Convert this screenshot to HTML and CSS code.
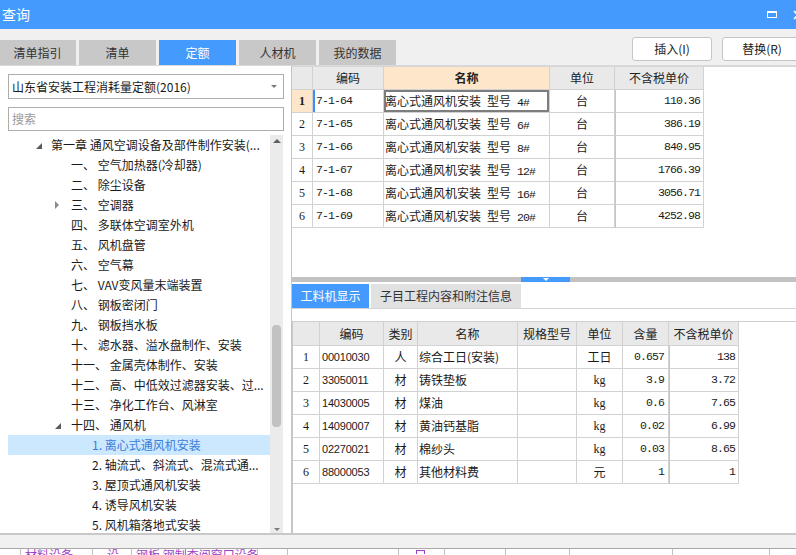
FILE: index.html
```html
<!DOCTYPE html>
<html lang="zh-CN">
<head>
<meta charset="utf-8">
<title>查询</title>
<link rel="stylesheet" href="styles.css">
</head>
<body>
<div class="titlebar">
  <span class="title">查询</span>
  <div class="win-ctrls">
    <span class="max-icon"></span>
    <svg class="close-icon" viewBox="0 0 10 10"><path d="M1 1 L9 9 M9 1 L1 9" stroke="#fff" stroke-width="1.6" fill="none"/></svg>
  </div>
</div>

<div class="toolbar">
  <div class="tabs">
    <div class="tab">清单指引</div>
    <div class="tab">清单</div>
    <div class="tab active">定额</div>
    <div class="tab">人材机</div>
    <div class="tab">我的数据</div>
  </div>
  <div class="btns">
    <button class="btn">插入(I)</button>
    <button class="btn">替换(R)</button>
  </div>
</div>

<div class="main">
  <div class="left">
    <div class="select">山东省安装工程消耗量定额(2016)<span class="caret"></span></div>
    <div class="search">搜索</div>
    <div class="treebox">
      <div class="tree">
        <div class="node l1"><span class="exp"><span class="tri-open"></span></span><span class="lbl">第一章 通风空调设备及部件制作安装(...</span></div>
        <div class="node l2"><span class="exp"></span><span class="lbl">一、 空气加热器(冷却器)</span></div>
        <div class="node l2"><span class="exp"></span><span class="lbl">二、 除尘设备</span></div>
        <div class="node l2"><span class="exp"><span class="tri-closed"></span></span><span class="lbl">三、 空调器</span></div>
        <div class="node l2"><span class="exp"></span><span class="lbl">四、 多联体空调室外机</span></div>
        <div class="node l2"><span class="exp"></span><span class="lbl">五、 风机盘管</span></div>
        <div class="node l2"><span class="exp"></span><span class="lbl">六、 空气幕</span></div>
        <div class="node l2"><span class="exp"></span><span class="lbl">七、 VAV变风量末端装置</span></div>
        <div class="node l2"><span class="exp"></span><span class="lbl">八、 钢板密闭门</span></div>
        <div class="node l2"><span class="exp"></span><span class="lbl">九、 钢板挡水板</span></div>
        <div class="node l2"><span class="exp"></span><span class="lbl">十、 滤水器、溢水盘制作、安装</span></div>
        <div class="node l2"><span class="exp"></span><span class="lbl">十一、 金属壳体制作、安装</span></div>
        <div class="node l2"><span class="exp"></span><span class="lbl">十二、 高、中低效过滤器安装、过...</span></div>
        <div class="node l2"><span class="exp"></span><span class="lbl">十三、 净化工作台、风淋室</span></div>
        <div class="node l2"><span class="exp"><span class="tri-open"></span></span><span class="lbl">十四、 通风机</span></div>
        <div class="node l3 selected"><span class="exp"></span><span class="lbl">1. 离心式通风机安装</span></div>
        <div class="node l3"><span class="exp"></span><span class="lbl">2. 轴流式、斜流式、混流式通...</span></div>
        <div class="node l3"><span class="exp"></span><span class="lbl">3. 屋顶式通风机安装</span></div>
        <div class="node l3"><span class="exp"></span><span class="lbl">4. 诱导风机安装</span></div>
        <div class="node l3"><span class="exp"></span><span class="lbl">5. 风机箱落地式安装</span></div>
      </div>
      <div class="vscroll">
        <span class="arrow-up"></span>
        <span class="thumb"></span>
        <span class="arrow-down"></span>
      </div>
    </div>
  </div>

  <div class="right">
    <div class="top-grid">
      <div class="g1 row head">
        <div class="c"></div>
        <div class="c center">编码</div>
        <div class="c center hl">名称</div>
        <div class="c center">单位</div>
        <div class="c center">不含税单价</div>
      </div>
      <div class="g1 row">
        <div class="c center rn cur">1</div>
        <div class="c mono pl cur-code">7-1-64</div>
        <div class="c name cur-cell">离心式通风机安装&ensp;型号&ensp;<span class="mono">4#</span></div>
        <div class="c center">台</div>
        <div class="c mono right">110.36</div>
      </div>
      <div class="g1 row">
        <div class="c center rn">2</div>
        <div class="c mono pl">7-1-65</div>
        <div class="c name">离心式通风机安装&ensp;型号&ensp;<span class="mono">6#</span></div>
        <div class="c center">台</div>
        <div class="c mono right">386.19</div>
      </div>
      <div class="g1 row">
        <div class="c center rn">3</div>
        <div class="c mono pl">7-1-66</div>
        <div class="c name">离心式通风机安装&ensp;型号&ensp;<span class="mono">8#</span></div>
        <div class="c center">台</div>
        <div class="c mono right">840.95</div>
      </div>
      <div class="g1 row">
        <div class="c center rn">4</div>
        <div class="c mono pl">7-1-67</div>
        <div class="c name">离心式通风机安装&ensp;型号&ensp;<span class="mono">12#</span></div>
        <div class="c center">台</div>
        <div class="c mono right">1766.39</div>
      </div>
      <div class="g1 row">
        <div class="c center rn">5</div>
        <div class="c mono pl">7-1-68</div>
        <div class="c name">离心式通风机安装&ensp;型号&ensp;<span class="mono">16#</span></div>
        <div class="c center">台</div>
        <div class="c mono right">3056.71</div>
      </div>
      <div class="g1 row">
        <div class="c center rn">6</div>
        <div class="c mono pl">7-1-69</div>
        <div class="c name">离心式通风机安装&ensp;型号&ensp;<span class="mono">20#</span></div>
        <div class="c center">台</div>
        <div class="c mono right">4252.98</div>
      </div>
    </div>

    <div class="splitter"><div class="split-handle"><span class="split-tri"></span></div></div>

    <div class="bottom">
      <div class="subtabs">
        <div class="stab active">工料机显示</div>
        <div class="stab wide">子目工程内容和附注信息</div>
      </div>
      <div class="grid2">
        <div class="g2 row head">
          <div class="c"></div>
          <div class="c center">编码</div>
          <div class="c center">类别</div>
          <div class="c center">名称</div>
          <div class="c center">规格型号</div>
          <div class="c center">单位</div>
          <div class="c center">含量</div>
          <div class="c center">不含税单价</div>
        </div>
        <div class="g2 row">
          <div class="c center rn">1</div>
          <div class="c code">00010030</div>
          <div class="c center">人</div>
          <div class="c name">综合工日(安装)</div>
          <div class="c"></div>
          <div class="c center">工日</div>
          <div class="c mono right2">0.657</div>
          <div class="c mono right">138</div>
        </div>
        <div class="g2 row">
          <div class="c center rn">2</div>
          <div class="c code">33050011</div>
          <div class="c center">材</div>
          <div class="c name">铸铁垫板</div>
          <div class="c"></div>
          <div class="c center serif">kg</div>
          <div class="c mono right2">3.9</div>
          <div class="c mono right">3.72</div>
        </div>
        <div class="g2 row">
          <div class="c center rn">3</div>
          <div class="c code">14030005</div>
          <div class="c center">材</div>
          <div class="c name">煤油</div>
          <div class="c"></div>
          <div class="c center serif">kg</div>
          <div class="c mono right2">0.6</div>
          <div class="c mono right">7.65</div>
        </div>
        <div class="g2 row">
          <div class="c center rn">4</div>
          <div class="c code">14090007</div>
          <div class="c center">材</div>
          <div class="c name">黄油钙基脂</div>
          <div class="c"></div>
          <div class="c center serif">kg</div>
          <div class="c mono right2">0.02</div>
          <div class="c mono right">6.99</div>
        </div>
        <div class="g2 row">
          <div class="c center rn">5</div>
          <div class="c code">02270021</div>
          <div class="c center">材</div>
          <div class="c name">棉纱头</div>
          <div class="c"></div>
          <div class="c center serif">kg</div>
          <div class="c mono right2">0.03</div>
          <div class="c mono right">8.65</div>
        </div>
        <div class="g2 row">
          <div class="c center rn">6</div>
          <div class="c code">88000053</div>
          <div class="c center">材</div>
          <div class="c name">其他材料费</div>
          <div class="c"></div>
          <div class="c center">元</div>
          <div class="c mono right2">1</div>
          <div class="c mono right">1</div>
        </div>
      </div>
    </div>
  </div>
</div>

<div class="strip"></div>

<div class="under">
  <div class="u"></div>
  <div class="u purple">材料设备</div>
  <div class="u purple ind">设</div>
  <div class="u purple">钢板 钢制查阅窗口设备</div>
  <div class="u"></div>
  <div class="u"></div>
  <div class="u"><span class="pbox"></span></div>
  <div class="u"></div>
  <div class="u"></div>
  <div class="u"></div>
  <div class="u"></div>
  <div class="u last"></div>
</div>
</body>
</html>
```

FILE: styles.css
```css
* { box-sizing: border-box; }
html, body { margin: 0; padding: 0; }
body {
  width: 796px;
  height: 555px;
  overflow: hidden;
  background: #fff;
  font-family: "Noto Sans CJK SC", "Microsoft YaHei", sans-serif;
  font-size: 12px;
  color: #222;
}

/* title bar */
.titlebar {
  height: 29px;
  background: #459bfd;
  color: #fff;
  display: flex;
  align-items: center;
  padding-left: 2px;
  overflow: hidden;
}
.title { font-size: 14px; line-height: 29px; }
.win-ctrls {
  margin-left: auto;
  margin-right: -7px;
  display: flex;
  align-items: center;
  gap: 16px;
}
.max-icon {
  width: 10px;
  height: 7px;
  border: 1px solid #fff;
  border-top-width: 2px;
}
.close-icon { width: 10px; height: 10px; display: block; }

/* toolbar with tabs and buttons */
.toolbar {
  height: 37px;
  background: #f0f0f0;
  border-bottom: 1px solid #d9d9d9;
  display: flex;
  align-items: flex-start;
}
.tabs {
  display: flex;
  gap: 3px;
  margin-top: 11px;
  margin-left: -1px;
}
.tab {
  width: 77px;
  height: 25px;
  background: #c8c8c8;
  color: #333;
  display: flex;
  align-items: center;
  justify-content: center;
  line-height: 25px;
}
.tab.active { background: #459bfd; color: #fff; }
.btns {
  margin-left: auto;
  margin-right: -6px;
  margin-top: 8px;
  display: flex;
  gap: 10px;
}
.btn {
  width: 80px;
  height: 24px;
  background: #fff;
  border: 1px solid #c6c6c6;
  border-radius: 3px;
  font-family: "Noto Sans CJK SC", "Microsoft YaHei", sans-serif;
  font-size: 12px;
  color: #222;
  padding: 0;
  line-height: 22px;
}

/* main */
.main {
  height: 469px;
  display: flex;
  border-bottom: 2px solid #c8c8c8;
}
.left {
  width: 291px;
  flex: none;
  background: #fff;
  padding: 8px 7px 0 8px;
  display: flex;
  flex-direction: column;
}
.select {
  height: 25px;
  border: 1px solid #adadad;
  display: flex;
  align-items: center;
  padding-left: 3px;
  line-height: 23px;
  color: #1a1a1a;
}
.caret {
  margin-left: auto;
  margin-right: 6px;
  width: 0;
  height: 0;
  border-left: 3px solid transparent;
  border-right: 3px solid transparent;
  border-top: 3px solid #7a7a7a;
}
.search {
  margin-top: 8px;
  height: 24px;
  border: 1px solid #adadad;
  padding-left: 3px;
  line-height: 22px;
  color: #9a9a9a;
}
.treebox {
  margin-top: 4px;
  flex: 1;
  display: flex;
  overflow: hidden;
}
.tree { width: 262px; flex: none; overflow: hidden; }
.node {
  height: 20px;
  line-height: 20px;
  display: flex;
  align-items: center;
  white-space: nowrap;
  color: #1a1a1a;
}
.node.l1 { padding-left: 28px; }
.node.l1 .exp { width: 15px; }
.node.l2 { padding-left: 47px; }
.node.l3 { padding-left: 68px; }
.exp { width: 16px; flex: none; display: flex; align-items: center; height: 20px; }
.lbl { overflow: hidden; }
.node.selected { background: #cce8ff; color: #3b7cd8; }
.tri-open {
  width: 0;
  height: 0;
  border-left: 6px solid transparent;
  border-bottom: 6px solid #5a5a5a;
  margin-top: 1px;
}
.tri-closed {
  width: 0;
  height: 0;
  border-top: 4px solid transparent;
  border-bottom: 4px solid transparent;
  border-left: 4px solid #8a8a8a;
}
.vscroll {
  width: 13px;
  flex: none;
  background: #ebebeb;
  display: flex;
  flex-direction: column;
  align-items: center;
}
.arrow-up {
  margin-top: 4px;
  width: 0;
  height: 0;
  border-left: 4px solid transparent;
  border-right: 4px solid transparent;
  border-bottom: 4px solid #606060;
}
.thumb {
  margin-top: 182px;
  width: 9px;
  height: 102px;
  background: #c2c2c2;
  border-radius: 4px;
}
.arrow-down {
  margin-top: auto;
  margin-bottom: 2px;
  width: 0;
  height: 0;
  border-left: 3px solid transparent;
  border-right: 3px solid transparent;
  border-top: 3px solid #7a7a7a;
}

/* right side */
.right {
  flex: 1;
  border-left: 1px solid #c4c4c4;
  display: flex;
  flex-direction: column;
  background: #fff;
}
.top-grid {
  height: 211px;
  flex: none;
  border-top: 1px solid #d6d6d6;
}
.row { display: grid; height: 23px; }
.g1 { grid-template-columns: 21px 71px 166px 65px 89px; }
.g2 { grid-template-columns: 27px 64px 34px 100px 59px 46px 46px 70px; }
.c {
  border-right: 1px solid #d2d2d2;
  border-bottom: 1px solid #d2d2d2;
  line-height: 22px;
  white-space: nowrap;
  overflow: hidden;
  color: #1a1a1a;
}
.row.head .c { background: #e9e9e9; color: #222; }
.row.head .c.hl { background: #fde6c9; font-weight: bold; }
.center { text-align: center; }
.c.right { text-align: right; padding-right: 3px; }
.c.right2 { text-align: right; padding-right: 4px; }
.c.pl { padding-left: 3px; }
.c.name { padding-left: 1px; }
.mono {
  font-family: "Liberation Mono", "DejaVu Sans Mono", monospace;
  font-size: 11.5px;
  letter-spacing: -0.9px;
}
.serif { font-family: "Liberation Serif", serif; font-size: 12px; }
.code {
  padding-left: 2px;
  font-family: "Liberation Sans", Arial, sans-serif;
  font-size: 11px;
  letter-spacing: -0.2px;
}
.rn { font-family: "Liberation Serif", serif; font-size: 12px; }
.rn.cur { background: #fde6c9; font-weight: bold; }
.cur-code { box-shadow: inset 2px 0 0 #3d8ef5; }
.cur-cell { box-shadow: inset 0 0 0 2px #7d7d7d; }

.splitter {
  height: 5px;
  flex: none;
  background: #c2c2c2;
  display: flex;
}
.split-handle {
  margin-left: 229px;
  width: 49px;
  height: 5px;
  background: #459bfd;
  display: flex;
  justify-content: center;
}
.split-tri {
  margin-top: 1px;
  width: 0;
  height: 0;
  border-left: 3px solid transparent;
  border-right: 3px solid transparent;
  border-top: 3px solid #fff;
}
.bottom {
  flex: 1;
  display: flex;
  flex-direction: column;
}
.subtabs {
  margin-top: 2px;
  height: 25px;
  border-bottom: 1px solid #d4d4d4;
  display: flex;
  gap: 2px;
}
.stab {
  width: 77px;
  height: 24px;
  background: #e1e1e1;
  color: #333;
  line-height: 24px;
  text-align: center;
}
.stab.active { background: #459bfd; color: #fff; }
.stab.wide { width: 150px; }
.grid2 {
  margin-top: 12px;
  flex: 1;
  border-top: 1px solid #cfcfcf;
  border-left: 1px solid #c8c8c8;
}
.g2.head { height: 24px; }
.g2.head .c { line-height: 23px; }

/* bottom strip and underlying window */
.strip {
  height: 14px;
  background: #f1f1f1;
  border-bottom: 1px solid #a9a9a9;
}
.under {
  height: 6px;
  display: grid;
  grid-template-columns: 21px 72px 39px 126px 30px 111px 46px 61px 64px 103px 97px 1fr;
  overflow: hidden;
}
.u {
  border-right: 1px solid #c0c0c0;
  overflow: hidden;
  white-space: nowrap;
  font-size: 12px;
  line-height: 12px;
}
.u.last { border-right: none; }
.purple { color: #a040c8; padding-left: 4px; }
.purple.ind { padding-left: 14px; }
.pbox {
  display: block;
  margin-left: 17px;
  width: 9px;
  height: 4px;
  border: 1px solid #a040c8;
  border-bottom: none;
  margin-top: 1px;
}
```
